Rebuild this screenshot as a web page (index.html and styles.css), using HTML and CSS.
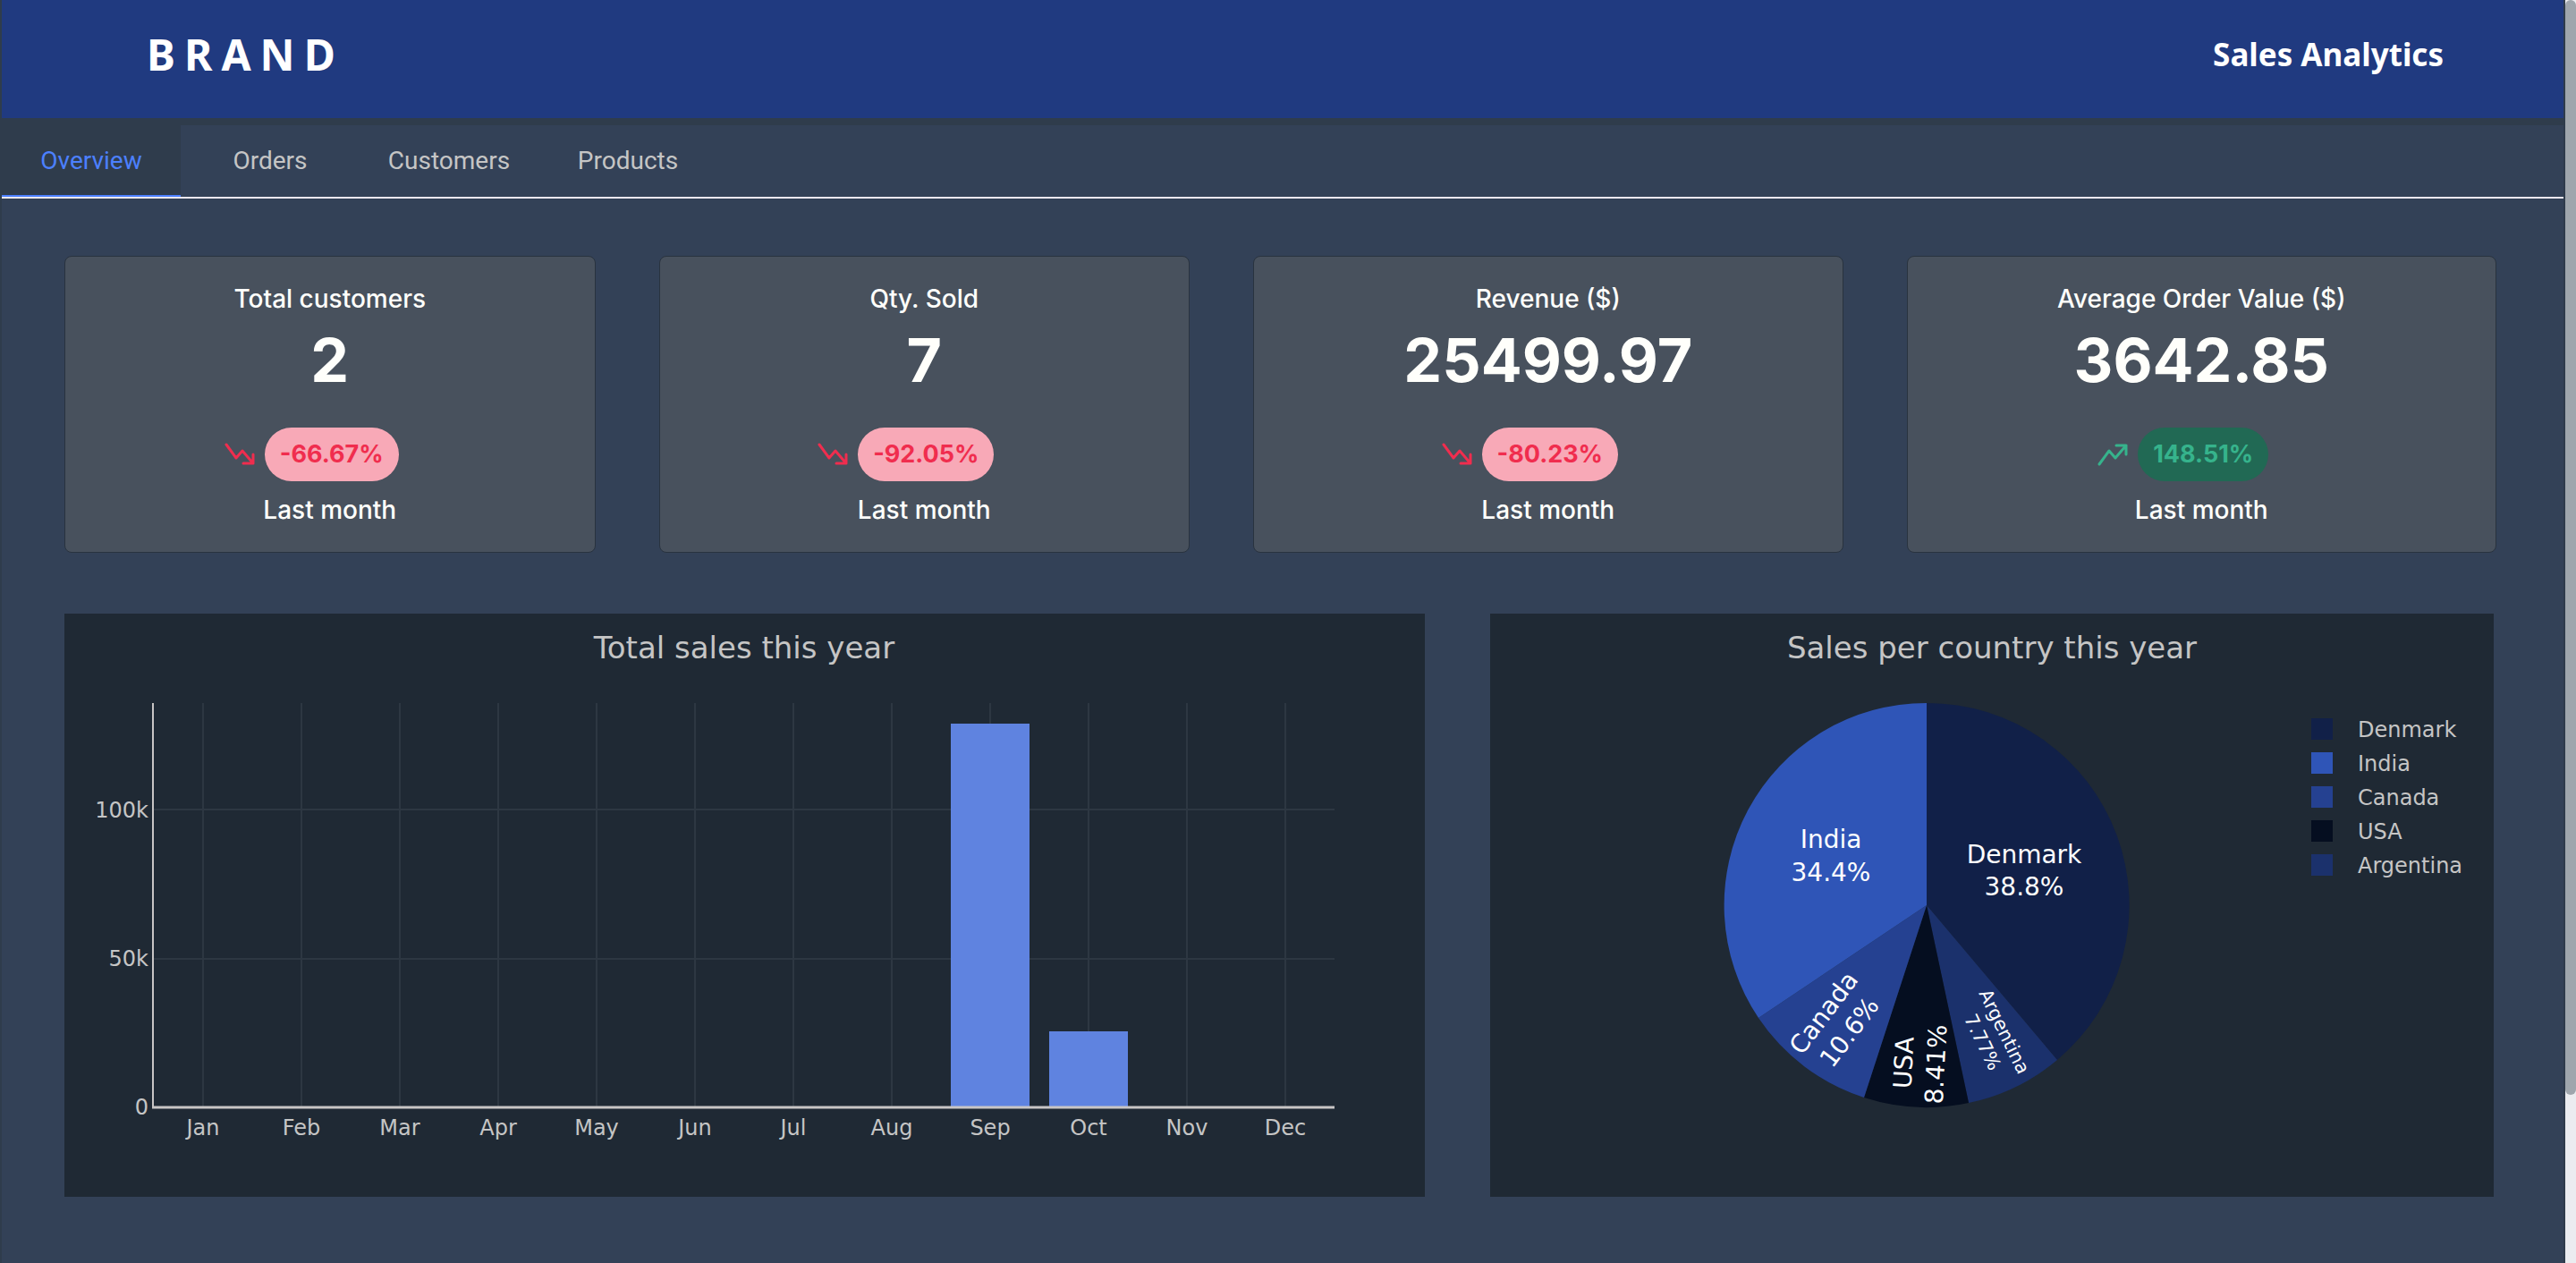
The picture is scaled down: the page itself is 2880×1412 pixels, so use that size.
FILE: index.html
```html
<!DOCTYPE html>
<html lang="en">
<head>
<meta charset="utf-8">
<title>Sales Analytics</title>
<link rel="stylesheet" href="styles.css">
</head>
<body>
<div class="app">
  <header class="header">
    <div class="brand">BRAND</div>
    <h1 class="title">Sales Analytics</h1>
  </header>
  <nav class="tabs">
    <a class="tab tab-active" href="#overview">Overview</a>
    <a class="tab" href="#orders">Orders</a>
    <a class="tab" href="#customers">Customers</a>
    <a class="tab" href="#products">Products</a>
  </nav>
  <main class="content">
    <section class="cards">
      <article class="card">
        <h2 class="card-label">Total customers</h2>
        <p class="card-value">2</p>
        <div class="trend trend-down">
          <svg class="trend-icon" viewBox="0 0 32 24"><path d="M1 1 L12 16 L19 8 L31 22 M31 12 V22 H20"/></svg>
          <span class="pill">-66.67%</span>
        </div>
        <p class="card-note">Last month</p>
      </article>
      <article class="card">
        <h2 class="card-label">Qty. Sold</h2>
        <p class="card-value">7</p>
        <div class="trend trend-down">
          <svg class="trend-icon" viewBox="0 0 32 24"><path d="M1 1 L12 16 L19 8 L31 22 M31 12 V22 H20"/></svg>
          <span class="pill">-92.05%</span>
        </div>
        <p class="card-note">Last month</p>
      </article>
      <article class="card">
        <h2 class="card-label">Revenue ($)</h2>
        <p class="card-value">25499.97</p>
        <div class="trend trend-down">
          <svg class="trend-icon" viewBox="0 0 32 24"><path d="M1 1 L12 16 L19 8 L31 22 M31 12 V22 H20"/></svg>
          <span class="pill">-80.23%</span>
        </div>
        <p class="card-note">Last month</p>
      </article>
      <article class="card">
        <h2 class="card-label">Average Order Value ($)</h2>
        <p class="card-value">3642.85</p>
        <div class="trend trend-up">
          <svg class="trend-icon" viewBox="0 0 32 24"><path d="M1 23 L12 8 L19 16 L31 2 M31 12 V2 H20"/></svg>
          <span class="pill">148.51%</span>
        </div>
        <p class="card-note">Last month</p>
      </article>
    </section>
    <section class="charts">
      <svg class="chart" viewBox="0 0 1521 652" role="img" aria-label="Total sales this year">
        <text class="chart-title" x="760" y="50">Total sales this year</text>
        <path class="grid" d="M155 100V552M265 100V552M375 100V552M485 100V552M595 100V552M705 100V552M815 100V552M925 100V552M1035 100V552M1145 100V552M1255 100V552M1365 100V552M100 219H1420M100 386H1420"/>
        <rect class="bar" x="991" y="123" width="88" height="428"/>
        <rect class="bar" x="1101" y="467" width="88" height="84"/>
        <path class="axis" d="M99 100V553"/>
        <path class="axis axis-zero" d="M98 552H1420"/>
        <g class="tick tick-y">
          <text x="94" y="228">100k</text>
          <text x="94" y="394">50k</text>
          <text x="94" y="560">0</text>
        </g>
        <g class="tick">
          <text x="155" y="583">Jan</text>
          <text x="265" y="583">Feb</text>
          <text x="375" y="583">Mar</text>
          <text x="485" y="583">Apr</text>
          <text x="595" y="583">May</text>
          <text x="705" y="583">Jun</text>
          <text x="815" y="583">Jul</text>
          <text x="925" y="583">Aug</text>
          <text x="1035" y="583">Sep</text>
          <text x="1145" y="583">Oct</text>
          <text x="1255" y="583">Nov</text>
          <text x="1365" y="583">Dec</text>
        </g>
      </svg>
      <svg class="chart" viewBox="0 0 1122 652" role="img" aria-label="Sales per country this year">
        <text class="chart-title" x="561" y="50">Sales per country this year</text>
        <path class="denmark" d="M488 326 V100 A226 226 0 0 1 634 499 Z"/>
        <path class="argentina" d="M488 326 L634 499 A226 226 0 0 1 535 547 Z"/>
        <path class="usa" d="M488 326 L535 547 A226 226 0 0 1 418 541 Z"/>
        <path class="canada" d="M488 326 L418 541 A226 226 0 0 1 300 452 Z"/>
        <path class="india" d="M488 326 L300 452 A226 226 0 0 1 488 100 Z"/>
        <g class="slice-label">
          <text x="381" y="262">India</text>
          <text x="381" y="299">34.4%</text>
          <text x="597" y="279">Denmark</text>
          <text x="597" y="315">38.8%</text>
          <g transform="translate(387 457) rotate(-53)">
            <text y="-8">Canada</text>
            <text y="28">10.6%</text>
          </g>
          <g transform="translate(480 503) rotate(-87)">
            <text y="-8">USA</text>
            <text y="28">8.41%</text>
          </g>
          <g class="slice-label-small" transform="translate(563 473) rotate(64)">
            <text y="-6">Argentina</text>
            <text y="21">7.77%</text>
          </g>
        </g>
        <rect class="denmark" x="918" y="117" width="24" height="24"/>
        <rect class="india" x="918" y="155" width="24" height="24"/>
        <rect class="canada" x="918" y="193" width="24" height="24"/>
        <rect class="usa" x="918" y="231" width="24" height="24"/>
        <rect class="argentina" x="918" y="269" width="24" height="24"/>
        <g class="tick tick-legend">
          <text x="970" y="138">Denmark</text>
          <text x="970" y="176">India</text>
          <text x="970" y="214">Canada</text>
          <text x="970" y="252">USA</text>
          <text x="970" y="290">Argentina</text>
        </g>
      </svg>
    </section>
  </main>
</div>
<div class="scroll-track"><div class="scroll-thumb"></div></div>
</body>
</html>
```
FILE: styles.css
```css
* {
  box-sizing: border-box;
}

body {
  display: flex;
  min-height: 100vh;
  margin: 0;
  background: #2f3c4c;
  color: #fffffb;
  font-family: Inter, "Liberation Sans", sans-serif;
}

h1, h2, p {
  margin: 0;
}

.app {
  flex: 1;
  display: flex;
  flex-direction: column;
  padding: 0 2px;
}

.header {
  display: flex;
  align-items: center;
  justify-content: space-between;
  height: 132px;
  padding: 0 134px 12px 162px;
  background: #203a80;
  color: #fff;
}

.brand {
  font-family: "Noto Sans", sans-serif;
  font-size: 48px;
  font-weight: 700;
  letter-spacing: 10px;
}

.title {
  font-family: "Noto Sans", sans-serif;
  font-size: 35px;
  font-weight: 700;
}

.tabs {
  display: flex;
  margin-top: 8px;
  border-bottom: 2px solid #ebe8ee;
  background: #334157;
}

.tab {
  width: 200px;
  height: 80px;
  border-bottom: 2px solid transparent;
  color: #c5c5c5;
  font-family: Roboto, "Liberation Sans", sans-serif;
  font-size: 28px;
  line-height: 80px;
  text-align: center;
  text-decoration: none;
}

.tab-active {
  border-color: #4c80ff;
  background: #2f3c4c;
  color: #4c80ff;
}

.content {
  flex: 1;
  padding: 64px 75px 74px 70px;
  background: #334157;
}

.cards {
  display: grid;
  grid-template-columns: 9fr 9fr 10fr 10fr;
  gap: 71px;
}

.card {
  display: flex;
  flex-direction: column;
  align-items: center;
  height: 332px;
  padding-top: 29px;
  border: 1px solid #29333f;
  border-radius: 8px;
  background: #48515d;
}

.card-label,
.card-note {
  font-size: 28px;
  font-weight: 500;
  line-height: 36px;
}

.card-value {
  font-size: 68px;
  font-weight: 700;
  line-height: 100px;
}

.trend {
  display: flex;
  align-items: center;
  gap: 12px;
  margin-top: 26px;
  padding-right: 40px;
}

.trend-icon {
  width: 32px;
  height: 24px;
  fill: none;
  stroke: currentColor;
  stroke-width: 3;
  stroke-linecap: round;
  stroke-linejoin: round;
  overflow: visible;
}

.pill {
  padding: 0 17px;
  border-radius: 30px;
  font-size: 27px;
  font-weight: 700;
  line-height: 60px;
}

.trend-down {
  color: #f02d4e;
}

.trend-down .pill {
  background: #f8a9b7;
}

.trend-up {
  color: #36b38c;
}

.trend-up .pill {
  background: #216954;
}

.card-note {
  margin-top: 14px;
}

.charts {
  display: grid;
  grid-template-columns: 1521fr 1122fr;
  gap: 73px;
  margin-top: 68px;
  padding-right: 3px;
}

.chart {
  display: block;
  width: 100%;
  background: #1f2934;
  font-family: Verdana, "DejaVu Sans", sans-serif;
}

.chart text {
  text-anchor: middle;
}

.chart-title {
  fill: #c5c5c5;
  font-size: 34px;
}

.tick {
  fill: #c5c5c5;
  font-size: 24px;
}

.chart .tick-y text {
  text-anchor: end;
}

.chart .tick-legend text {
  text-anchor: start;
}

.grid {
  stroke: #2d3742;
  stroke-width: 2;
}

.axis {
  stroke: #c8c5c5;
  stroke-width: 2;
}

.axis-zero {
  stroke-width: 3;
}

.bar {
  fill: #5f83e0;
}

.slice-label {
  fill: #fff;
  font-size: 28px;
}

.slice-label-small {
  font-size: 21px;
}

.denmark { fill: #112048; }
.india { fill: #2f55b7; }
.canada { fill: #254191; }
.usa { fill: #050e20; }
.argentina { fill: #1b316c; }

.scroll-track {
  width: 12px;
  background: #ebecf0;
}

.scroll-thumb {
  height: 1224px;
  border-radius: 6px;
  background: #9fa6ad;
}
```
